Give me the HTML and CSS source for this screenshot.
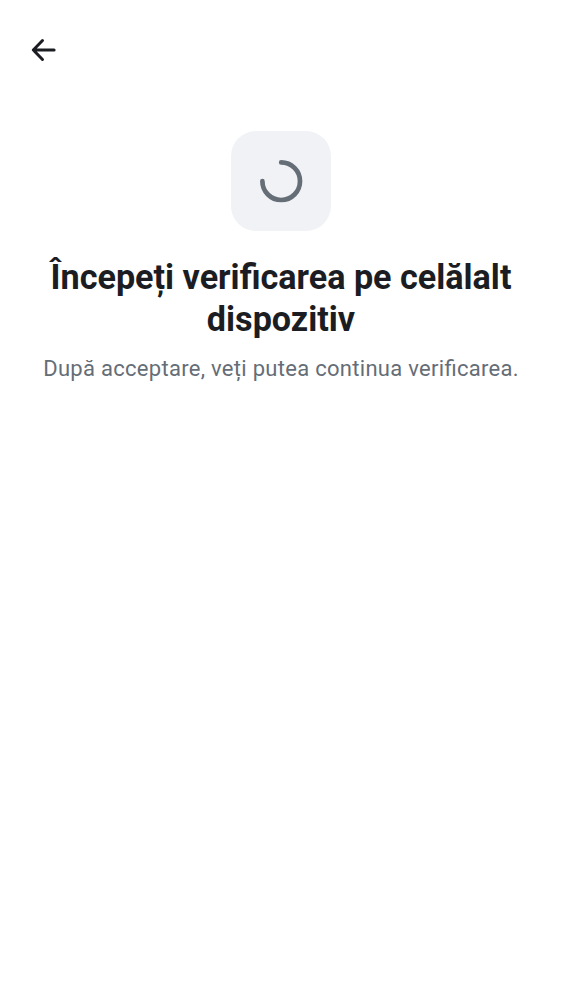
FILE: index.html
```html
<!DOCTYPE html>
<html lang="ro">
<head>
<meta charset="utf-8">
<title>Verificare</title>
<link rel="stylesheet" href="styles.css">
</head>
<body>
<header class="topbar">
<button class="back" aria-label="Înapoi">
<svg class="back-icon" viewBox="0 0 26 24" fill="none"><path d="M11.5 2.5 2.3 12l9.2 9.5M2.5 12h20.6"/></svg>
</button>
</header>
<main class="content">
<div class="tile">
<svg class="spinner" viewBox="0 0 44 44" fill="none"><path d="M22.2 3.4A18.8 18.8 0 1 1 3.4 22.2"/></svg>
</div>
<h1 class="title">Începeți verificarea pe celălalt dispozitiv</h1>
<p class="subtitle">După acceptare, veți putea continua verificarea.</p>
</main>
</body>
</html>
```

FILE: styles.css
```css
body {
  margin: 0;
  min-height: 1000px;
  background: #fff;
  font-family: Roboto, sans-serif;
}
.topbar {
  display: flex;
  align-items: center;
  height: 100px;
  padding-left: 31px;
}
.back {
  display: flex;
  padding: 0;
  border: 0;
  background: none;
}
.back-icon {
  width: 26px;
  height: 24px;
  stroke: #1b1d22;
  stroke-width: 3;
  stroke-linecap: round;
  stroke-linejoin: round;
}
.content {
  display: flex;
  flex-direction: column;
  align-items: center;
  padding: 31px 25px 0;
  text-align: center;
}
.tile {
  display: flex;
  align-items: center;
  justify-content: center;
  width: 100px;
  height: 100px;
  border-radius: 25px;
  background: #f0f2f5;
}
.spinner {
  width: 44px;
  height: 44px;
  stroke: #656d77;
  stroke-width: 4.7;
  stroke-linecap: round;
}
.title {
  margin: 25px 0 0;
  color: #1b1d22;
  font-size: 34.15px;
  font-weight: 700;
  line-height: 42px;
}
.subtitle {
  margin: 13px 0 0;
  color: #656d77;
  font-size: 22px;
  line-height: 31px;
  letter-spacing: 0.29px;
  font-feature-settings: "liga" 1;
  white-space: nowrap;
}
```
